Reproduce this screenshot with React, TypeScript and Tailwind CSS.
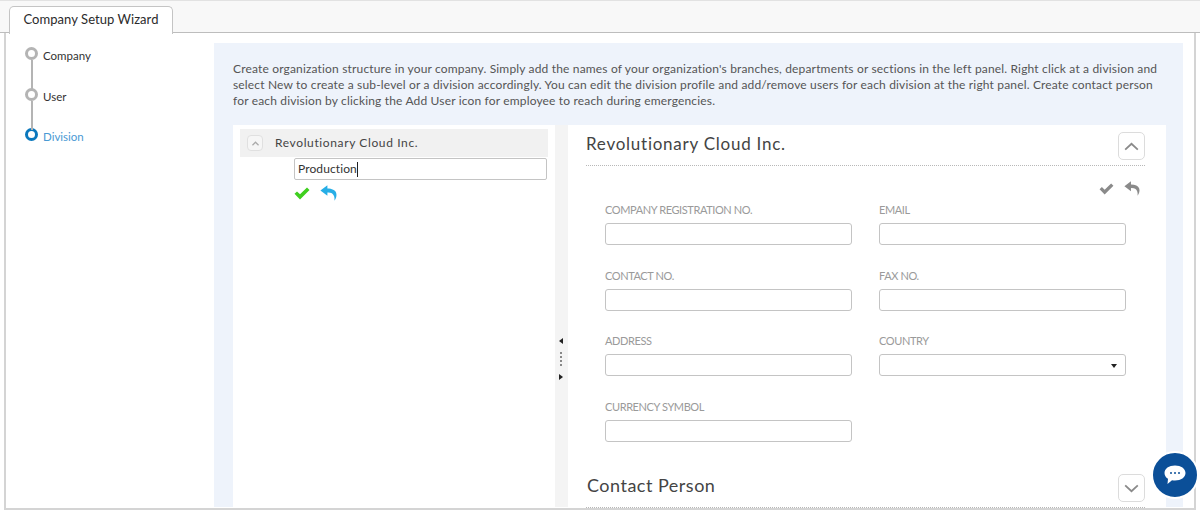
import React from 'react';

function Field({ label, select }: { label: string; select?: boolean }) {
  return (
    <div className="w-[247px] h-[65.5px] flex-shrink-0">
      <div className="h-[26px] pt-[5px] text-[11px] leading-[16px] text-[#9a9a9a] tracking-[-0.4px]">{label}</div>
      <div className="relative h-[22px] bg-white border border-[#c4c4c4] rounded-[3px]">
        {select && <span className="absolute right-[8px] top-[9px] border-x-[3px] border-x-transparent border-t-[4px] border-t-[#222]" />}
      </div>
    </div>
  );
}

function Check({ className }: { className: string }) {
  return (
    <svg viewBox="0 0 16 13" className={className} fill="currentColor">
      <path d="M0.5 6.8 L3 4.4 L6 7.2 L13 0.6 L15.5 3 L6 12.4 Z" />
    </svg>
  );
}

function Reply({ className }: { className: string }) {
  return (
    <svg viewBox="0 0 17 16" className={className} fill="currentColor">
      <path d="M7.4 0.3 L0.4 5.6 L7.4 10.8 L7.4 7.6 C11 7.4 13 8.6 14 11 C14.6 12.6 14.6 14.4 14.4 15.8 C16.2 13.4 17 10.6 16.2 8 C15.2 5 12 3.8 7.4 3.6 Z" />
    </svg>
  );
}

function Chevron({ down }: { down?: boolean }) {
  return (
    <svg viewBox="0 0 16 10" className="w-[15px] h-[9px]" fill="none" stroke="#8a8a8a" strokeWidth="2">
      <path d={down ? 'M1 1.5 L8 8 L15 1.5' : 'M1 8.5 L8 2 L15 8.5'} />
    </svg>
  );
}

export default function App() {
  return (
    <div className="relative w-[1200px] h-[512px] overflow-hidden bg-white text-[#333]" style={{ fontFamily: 'Lato, sans-serif' }}>
      {/* TAB STRIP */}
      <div className="h-[33px] pl-[9px] pt-[5px] bg-[#f8f8f8] border-t border-[#e2e2e2] border-b border-b-[#bdbdbd] flex">
        <div className="w-[164px] h-[28px] bg-white border border-[#c4c4c4] border-b-0 rounded-t-[5px] text-[13px] tracking-[0.05px] leading-[25px] text-center text-[#2b2b2b]">
          Company Setup Wizard
        </div>
      </div>

      <div className="h-[477px] mx-[4px] border-x-2 border-b-2 border-[#d4d4d4] flex">
        {/* STEPS */}
        <div className="w-[208px] flex-shrink-0 pl-[19px] pt-[16px]">
          <div className="relative flex items-center h-[14px] gap-[5px]">
            <span className="w-[13px] h-[13px] -mt-[5px] rounded-full border-[3px] border-[#b4b4b4] bg-white" />
            <span className="text-[11.5px] text-[#333]">Company</span>
            <span className="absolute left-[5.5px] top-[11px] w-[2px] h-[29px] bg-[#b4b4b4]" />
          </div>
          <div className="relative flex items-center h-[14px] gap-[5px] mt-[26.5px]">
            <span className="w-[13px] h-[13px] -mt-[5px] rounded-full border-[3px] border-[#b4b4b4] bg-white" />
            <span className="text-[11.5px] text-[#333]">User</span>
            <span className="absolute left-[5.5px] top-[11px] w-[2px] h-[29px] bg-[#b4b4b4]" />
          </div>
          <div className="flex items-center h-[14px] gap-[5px] mt-[26.5px]">
            <span className="w-[13px] h-[13px] -mt-[5px] rounded-full border-[3px] border-[#0b78bd] bg-white" />
            <span className="text-[11.5px] text-[#4a9ad4]">Division</span>
          </div>
        </div>

        {/* BLUE PANEL */}
        <div className="w-[969px] h-[464px] mt-[10px] bg-[#eef3fb] pl-[19px] pr-[18px] pt-[18px]">
          <p className="h-[64px] text-[12px] leading-[16px] text-[#555] tracking-[0.165px]">
            Create organization structure in your company. Simply add the names of your organization's branches, departments or sections in the left panel. Right click at a division and select New to create a sub-level or a division accordingly. You can edit the division profile and add/remove users for each division at the right panel. Create contact person for each division by clicking the Add User icon for employee to reach during emergencies.
          </p>

          <div className="flex h-[382px]">
            {/* TREE */}
            <div className="w-[322px] flex-shrink-0 bg-white px-[7px] pt-[4px]">
              <div className="h-[28px] bg-[#f1f1f1] flex items-center pl-[7px] gap-[12px]">
                <span className="w-[16px] h-[16px] rounded-[4px] border border-[#e0e0e0] bg-[#f6f6f6] flex items-center justify-center">
                  <svg viewBox="0 0 8 5" className="w-[7px] h-[5px]" fill="none" stroke="#aaa" strokeWidth="1.5">
                    <path d="M0.5 4.5 L4 1 L7.5 4.5" />
                  </svg>
                </span>
                <span className="text-[12px] tracking-[0.62px] text-[#444]">Revolutionary Cloud Inc.</span>
              </div>
              <div className="ml-[54px] mt-[1px] h-[22px] w-[253px] bg-white border border-[#c4c4c4] rounded-[2px] pl-[3px] text-[12px] tracking-[0.1px] leading-[20px] text-[#333] flex items-center">
                Production<span className="w-px h-[15px] bg-[#222]" />
              </div>
              <div className="ml-[54px] mt-[5px] flex items-center gap-[10px]">
                <Check className="w-[16px] h-[13px] text-[#3fcf1f]" />
                <Reply className="w-[17px] h-[16px] text-[#27aee6]" />
              </div>
            </div>

            {/* SPLITTER */}
            <div className="w-[13px] flex-shrink-0 bg-[#f4f4f4] flex flex-col items-center pt-[213px] pr-[2px]">
              <span className="border-y-[3.5px] border-y-transparent border-r-[4px] border-r-[#222]" />
              <span className="mt-[8px] h-[14px] border-l-2 border-dotted border-[#888]" />
              <span className="mt-[8px] border-y-[3.5px] border-y-transparent border-l-[4px] border-l-[#222]" />
            </div>

            {/* DETAILS */}
            <div className="w-[598px] flex-shrink-0 bg-white pl-[18px] pr-[21px] pt-[7px]">
              <div className="h-[34px] flex items-start justify-between border-b border-dotted border-[#b8b8b8]">
                <span className="text-[17px] leading-[24px] tracking-[0.75px] text-[#444]">Revolutionary Cloud Inc.</span>
                <span className="w-[27px] h-[28px] rounded-[5px] border border-[#dcdcdc] flex items-center justify-center">
                  <Chevron />
                </span>
              </div>
              <div className="flex justify-end gap-[9px] pr-[4px] pt-[15px] h-[31px] text-[#8a8a8a]">
                <Check className="w-[15px] h-[12px] mt-[2px]" />
                <Reply className="w-[18px] h-[15px]" />
              </div>
              <div className="pl-[19px] grid grid-cols-[247px_247px] gap-x-[27px]">
                <Field label="COMPANY REGISTRATION NO." />
                <Field label="EMAIL" />
                <Field label="CONTACT NO." />
                <Field label="FAX NO." />
                <Field label="ADDRESS" />
                <Field label="COUNTRY" select />
                <Field label="CURRENCY SYMBOL" />
              </div>
              <div className="mt-[15px] h-[34px] flex items-start justify-between border-b border-dotted border-[#b8b8b8]">
                <span className="text-[18px] leading-[22px] tracking-[0.5px] text-[#444] pl-px">Contact Person</span>
                <span className="w-[27px] h-[28px] rounded-[5px] border border-[#dcdcdc] flex items-center justify-center">
                  <Chevron down />
                </span>
              </div>
            </div>
          </div>
        </div>
      </div>

      {/* CHAT BUTTON */}
      <div className="absolute left-[1151px] top-[451px] w-[48px] h-[48px] rounded-full bg-[#0b4f98] border-[2px] border-white flex items-center justify-center">
        <svg viewBox="0 0 22 20" className="w-[22px] h-[20px]">
          <path d="M11 0.5 C17 0.5 21.5 3.6 21.5 8 C21.5 12.4 17 15.5 11 15.5 C10 15.5 9 15.4 8 15.2 L3.5 19 L4 13.8 C1.8 12.4 0.5 10.4 0.5 8 C0.5 3.6 5 0.5 11 0.5 Z" fill="#fff" />
          <circle cx="7" cy="8" r="1" fill="#0b4f98" />
          <circle cx="11" cy="8" r="1" fill="#0b4f98" />
          <circle cx="15" cy="8" r="1" fill="#0b4f98" />
        </svg>
      </div>
    </div>
  );
}
